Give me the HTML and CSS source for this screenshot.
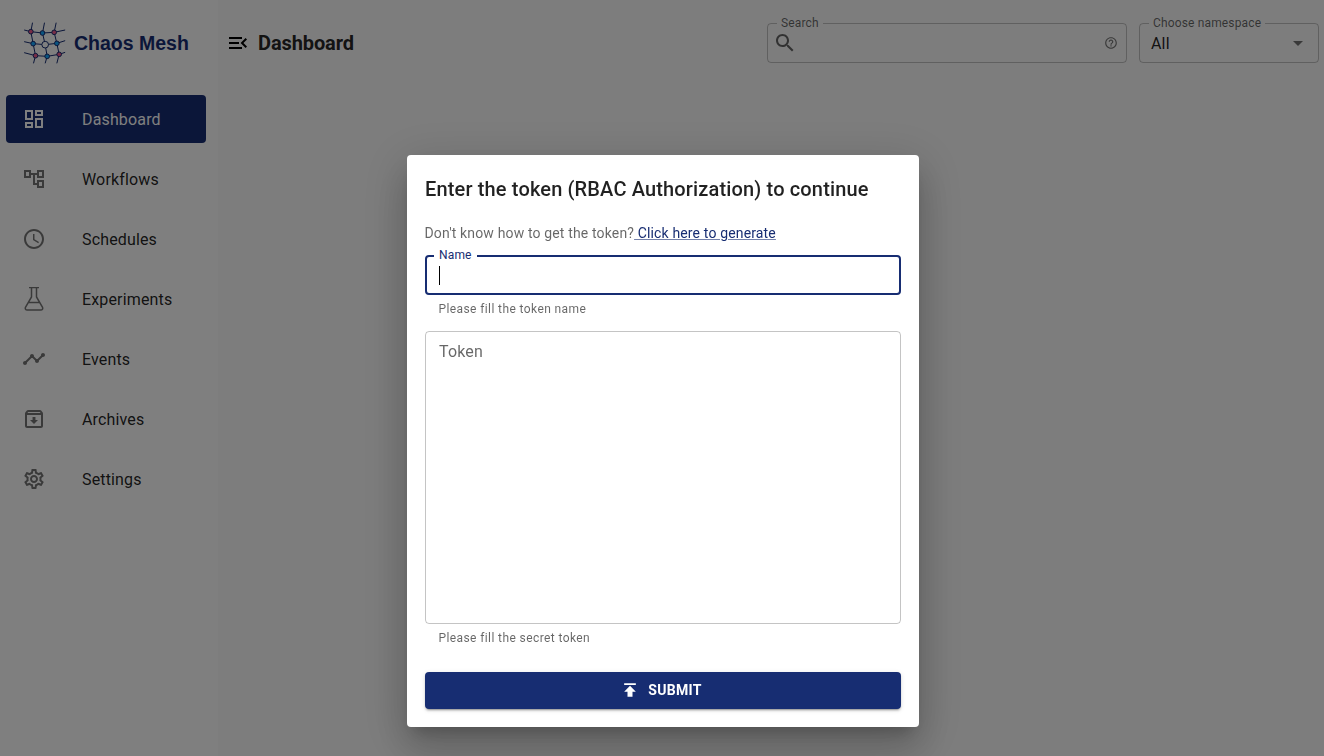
FILE: index.html
```html
<!DOCTYPE html>
<html lang="en">
<head>
  <meta charset="UTF-8">
  <title>Chaos Mesh Dashboard</title>
  <link rel="stylesheet" href="styles.css">
</head>
<body>

  <div class="app">
    <!-- SIDEBAR -->
    <aside class="sidebar">
      <div class="brand">
        <svg class="brand-logo" viewBox="72 66 125 126" fill="none">
          <g class="logo-lines">
            <path d="M72 90L92 95L127 99L162 97L195 90"/>
            <path d="M72 125L99 131L135 134L170 130L195 122"/>
            <path d="M72 158L106 167L141 169L177 163L195 157"/>
            <path d="M97 68L92 95L99 131L106 167L100 190"/>
            <path d="M133 68L127 99L135 134L141 169L135 190"/>
            <path d="M168 68L162 97L170 130L177 163L170 190"/>
          </g>
          <g class="logo-lines">
            <circle class="node-red" cx="92" cy="95" r="7"/>
            <circle class="node-blue" cx="127" cy="99" r="7"/>
            <circle class="node-red" cx="162" cy="97" r="7"/>
            <circle class="node-blue" cx="99" cy="131" r="7"/>
            <circle class="node-white" cx="135" cy="134" r="10"/>
            <circle class="node-blue" cx="170" cy="130" r="7"/>
            <circle class="node-red" cx="106" cy="167" r="7"/>
            <circle class="node-blue" cx="141" cy="169" r="7"/>
            <circle class="node-red" cx="177" cy="163" r="7"/>
          </g>
        </svg>
        <span class="brand-name">Chaos Mesh</span>
      </div>

      <nav class="nav">
        <a class="nav-item active">
          <svg class="nav-icon" viewBox="0 0 24 24"><path d="M19 5v2h-4V5h4M9 5v6H5V5h4m10 8v6h-4v-6h4M9 17v2H5v-2h4M21 3h-8v6h8V3zM11 3H3v10h8V3zm10 8h-8v10h8V11zm-10 4H3v6h8v-6z"/></svg>
          <span>Dashboard</span>
        </a>
        <a class="nav-item">
          <svg class="nav-icon" viewBox="0 0 24 24"><path d="M22 11V3h-7v3H9V3H2v8h7V8h2v10h4v3h7v-8h-7v3h-2V8h2v3h7zM7 9H4V5h3v4zm10 6h3v4h-3v-4zm0-10h3v4h-3V5z"/></svg>
          <span>Workflows</span>
        </a>
        <a class="nav-item">
          <svg class="nav-icon" viewBox="0 0 24 24"><path d="M11.99 2C6.47 2 2 6.48 2 12s4.47 10 9.99 10C17.52 22 22 17.52 22 12S17.52 2 11.99 2zM12 20c-4.42 0-8-3.58-8-8s3.58-8 8-8 8 3.58 8 8-3.58 8-8 8zm.5-13H11v6l5.25 3.15.75-1.23-4.5-2.67z"/></svg>
          <span>Schedules</span>
        </a>
        <a class="nav-item">
          <svg class="nav-icon flask" viewBox="0 0 24 24"><path d="M7 .5H17M9.500 .5V10L3.600 20c-.8 1.500 0 3 1.600 3H18.800c1.600 0 2.400-1.500 1.600-3L14.500 10V.5M6.500 15.500H17.500"/></svg>
          <span>Experiments</span>
        </a>
        <a class="nav-item">
          <svg class="nav-icon" viewBox="0 0 24 24"><path d="M23 8c0 1.100-.9 2-2 2-.18 0-.35-.02-.51-.07l-3.560 3.550c.05.16.07.34.07.52 0 1.100-.9 2-2 2s-2-.9-2-2c0-.18.02-.36.07-.52l-2.550-2.550c-.16.05-.34.07-.52.07s-.36-.02-.52-.07l-4.550 4.560c.05.16.07.33.07.51 0 1.100-.9 2-2 2s-2-.9-2-2 .9-2 2-2c.18 0 .35.02.51.07l4.560-4.550C8.020 9.360 8 9.180 8 9c0-1.100.9-2 2-2s2 .9 2 2c0 .18-.02.36-.07.52l2.550 2.550c.16-.05.34-.07.52-.07s.36.02.52.07l3.550-3.560C19.020 8.350 19 8.180 19 8c0-1.100.9-2 2-2s2 .9 2 2z"/></svg>
          <span>Events</span>
        </a>
        <a class="nav-item">
          <svg class="nav-icon" viewBox="0 0 24 24"><path d="m20.540 5.230-1.390-1.680C18.880 3.210 18.470 3 18 3H6c-.47 0-.88.21-1.160.55L3.460 5.230C3.170 5.570 3 6.020 3 6.500V19c0 1.100.9 2 2 2h14c1.100 0 2-.9 2-2V6.500c0-.48-.17-.93-.46-1.270zM6.240 5h11.520l.81.97H5.440l.8-.97zM5 19V8h14v11H5zm8.450-9h-2.900v3H8l4 4 4-4h-2.550z"/></svg>
          <span>Archives</span>
        </a>
        <a class="nav-item">
          <svg class="nav-icon" viewBox="0 0 24 24"><path d="M19.430 12.980c.04-.32.07-.64.07-.98 0-.34-.03-.66-.07-.98l2.110-1.650c.19-.15.24-.42.12-.64l-2-3.460c-.09-.16-.26-.25-.44-.25-.06 0-.12.01-.17.03l-2.490 1c-.52-.4-1.080-.73-1.690-.98l-.38-2.650C14.460 2.180 14.250 2 14 2h-4c-.25 0-.46.18-.49.42l-.38 2.650c-.61.25-1.170.59-1.690.98l-2.490-1c-.06-.02-.12-.03-.18-.03-.17 0-.34.09-.43.25l-2 3.460c-.13.22-.07.49.12.64l2.110 1.650c-.04.32-.07.65-.07.98 0 .33.03.66.07.98l-2.110 1.650c-.19.15-.24.42-.12.64l2 3.460c.09.16.26.25.44.25.06 0 .12-.01.17-.03l2.490-1c.52.4 1.080.73 1.690.98l.38 2.650c.03.24.24.42.49.42h4c.25 0 .46-.18.49-.42l.38-2.650c.61-.25 1.170-.59 1.690-.98l2.490 1c.06.02.12.03.18.03.17 0 .34-.09.43-.25l2-3.460c.12-.22.07-.49-.12-.64l-2.110-1.650zm-1.980-1.710c.04.31.05.52.05.73 0 .21-.02.43-.05.73l-.14 1.130.89.7 1.080.84-.7 1.210-1.270-.51-1.040-.42-.9.68c-.43.32-.84.56-1.250.73l-1.060.43-.16 1.130-.2 1.350h-1.400l-.19-1.350-.16-1.130-1.060-.43c-.43-.18-.83-.41-1.230-.71l-.91-.7-1.060.43-1.270.51-.7-1.210 1.080-.84.89-.7-.14-1.130c-.03-.31-.05-.54-.05-.74s.02-.43.05-.73l.14-1.130-.89-.7-1.080-.84.7-1.210 1.270.51 1.040.42.9-.68c.43-.32.84-.56 1.250-.73l1.060-.43.16-1.130.2-1.350h1.390l.19 1.350.16 1.130 1.060.43c.43.18.83.41 1.230.71l.91.7 1.060-.43 1.270-.51.7 1.210-1.070.85-.89.7.14 1.130zM12 8c-2.210 0-4 1.790-4 4s1.790 4 4 4 4-1.790 4-4-1.790-4-4-4zm0 6c-1.100 0-2-.9-2-2s.9-2 2-2 2 .9 2 2-.9 2-2 2z"/></svg>
          <span>Settings</span>
        </a>
      </nav>
    </aside>

    <!-- TOP BAR -->
    <main class="main">
      <header class="topbar">
        <svg class="menu-icon" viewBox="0 0 24 24"><path d="M3 18h13v-2H3v2zm0-5h10v-2H3v2zm0-7v2h13V6H3zm18 9.590L17.420 12 21 8.410 19.590 7l-5 5 5 5L21 15.590z"/></svg>
        <h1 class="page-title">Dashboard</h1>

        <div class="field field-search">
          <span class="field-label">Search</span>
          <svg class="search-icon" viewBox="0 0 24 24"><path d="M15.500 14h-.79l-.28-.27C15.410 12.590 16 11.110 16 9.500 16 5.910 13.090 3 9.500 3S3 5.910 3 9.500 5.910 16 9.500 16c1.610 0 3.090-.59 4.230-1.570l.27.28v.79l5 4.990L20.490 19l-4.990-5zm-6 0C7.010 14 5 11.990 5 9.500S7.010 5 9.500 5 14 7.010 14 9.500 11.990 14 9.500 14z"/></svg>
          <svg class="help-icon" viewBox="0 0 24 24"><path d="M11 18h2v-2h-2v2zm1-16C6.480 2 2 6.480 2 12s4.480 10 10 10 10-4.480 10-10S17.520 2 12 2zm0 18c-4.410 0-8-3.590-8-8s3.590-8 8-8 8 3.590 8 8-3.590 8-8 8zm0-14c-2.210 0-4 1.790-4 4h2c0-1.100.9-2 2-2s2 .9 2 2c0 2-3 1.750-3 5h2c0-2.250 3-2.500 3-5 0-2.210-1.790-4-4-4z"/></svg>
        </div>

        <div class="field field-namespace">
          <span class="field-label">Choose namespace</span>
          <span class="field-value">All</span>
          <svg class="drop-icon" viewBox="0 0 24 24"><path d="M7 10l5 5 5-5z"/></svg>
        </div>
      </header>
    </main>
  </div>

  <!-- TOKEN DIALOG -->
  <div class="backdrop">
    <div class="dialog">
      <h2 class="dialog-title">Enter the token (RBAC Authorization) to continue</h2>
      <p class="dialog-hint">Don't know how to get the token?<a class="dialog-link"> Click here to generate</a></p>

      <div class="token-name">
        <span class="token-name-label">Name</span>
        <span class="caret"></span>
      </div>
      <p class="helper">Please fill the token name</p>

      <div class="token-box">Token</div>
      <p class="helper">Please fill the secret token</p>

      <button class="submit">
        <svg class="submit-icon" viewBox="0 0 24 24"><path d="M5 4v2h14V4H5zm0 10h4v6h6v-6h4l-7-7-7 7z"/></svg>
        SUBMIT
      </button>
    </div>
  </div>

</body>
</html>
```

FILE: styles.css
```css
* {
  box-sizing: border-box;
}

body {
  margin: 0;
  height: 756px;
  overflow: hidden;
  font-family: Roboto, "Liberation Sans", sans-serif;
  letter-spacing: 0.15px;
  color: rgba(0, 0, 0, 0.87);
  background-color: #fafafa;
}

.app {
  display: flex;
  height: 100%;
}

/* sidebar */
.sidebar {
  flex: 0 0 218px;
  background-color: #fff;
  padding: 0 12px 0 6px;
}

.brand {
  display: flex;
  align-items: center;
  height: 86px;
  padding-left: 18px;
}

.brand-logo {
  width: 42px;
  height: 42px;
  flex: none;
}

.logo-lines {
  stroke: #172d72;
  stroke-width: 3;
}

.node-red {
  fill: #ef5a8c;
}

.node-blue {
  fill: #14a8ff;
}

.node-white {
  fill: #fff;
}

.brand-name {
  margin-left: 8px;
  font-family: "Liberation Sans", Arial, sans-serif;
  font-size: 19.5px;
  font-weight: 700;
  letter-spacing: 0;
  color: #172d72;
  white-space: nowrap;
}

.nav {
  display: flex;
  flex-direction: column;
  gap: 12px;
  padding-top: 9px;
}

.nav-item {
  display: flex;
  align-items: center;
  height: 48px;
  padding-left: 16px;
  border-radius: 4px;
  font-size: 16px;
}

.nav-item.active {
  background-color: #172d72;
  color: #fff;
}

.nav-icon {
  width: 24px;
  height: 24px;
  margin-right: 36px;
  flex: none;
  fill: rgba(0, 0, 0, 0.54);
}

.nav-item.active .nav-icon {
  fill: #fff;
}

.nav-icon.flask {
  fill: none;
  stroke: rgba(0, 0, 0, 0.54);
  stroke-width: 1.5;
}

/* top bar */
.main {
  flex: 1;
  min-width: 0;
}

.topbar {
  display: flex;
  align-items: center;
  height: 86px;
  padding-right: 5px;
}

.menu-icon {
  width: 24px;
  height: 24px;
  margin-left: 8px;
  flex: none;
}

.page-title {
  margin: 0 0 0 8px;
  font-size: 20px;
  font-weight: 700;
  letter-spacing: -0.1px;
  flex: 1;
}

.field {
  position: relative;
  height: 40px;
  border: 1px solid rgba(0, 0, 0, 0.23);
  border-radius: 4px;
  display: flex;
  align-items: center;
}

.field-search {
  width: 360px;
  margin-right: 12px;
  justify-content: space-between;
  padding: 0 8px 0 5px;
}

.field-namespace {
  width: 180px;
  padding: 0 13px 0 11px;
  justify-content: space-between;
}

.field-label {
  position: absolute;
  top: -8px;
  left: 9px;
  padding: 0 4px;
  font-size: 12px;
  line-height: 14px;
  color: rgba(0, 0, 0, 0.6);
  background-color: #fafafa;
}

.field-value {
  font-size: 16px;
}

.search-icon {
  width: 24px;
  height: 24px;
  fill: rgba(0, 0, 0, 0.6);
}

.help-icon {
  width: 14px;
  height: 14px;
  fill: rgba(0, 0, 0, 0.54);
}

.drop-icon {
  width: 24px;
  height: 24px;
  margin-right: -5px;
  fill: rgba(0, 0, 0, 0.54);
}

/* dialog */
.backdrop {
  position: fixed;
  inset: 0;
  background-color: rgba(0, 0, 0, 0.5);
  display: flex;
  justify-content: center;
  align-items: flex-start;
  padding: 155px 0 0 2px;
}

.dialog {
  width: 512px;
  height: 572px;
  padding: 18px;
  background-color: #fff;
  border-radius: 4px;
  box-shadow: 0 11px 15px -7px rgba(0, 0, 0, 0.2), 0 24px 38px 3px rgba(0, 0, 0, 0.14), 0 9px 46px 8px rgba(0, 0, 0, 0.12);
}

.dialog-title {
  margin: 0;
  font-size: 20px;
  line-height: 32px;
  font-weight: 500;
}

.dialog-hint {
  margin: 18px 0 0 -0.5px;
  font-size: 14px;
  line-height: 20px;
  color: rgba(0, 0, 0, 0.6);
}

.dialog-link {
  color: #172d72;
  text-decoration: underline;
  text-decoration-color: rgba(23, 45, 114, 0.6);
}

.token-name {
  position: relative;
  height: 40px;
  margin-top: 12px;
  border: 2px solid #172d72;
  border-radius: 4px;
  display: flex;
  align-items: center;
  padding-left: 12px;
}

.token-name-label {
  position: absolute;
  top: -9px;
  left: 7px;
  padding: 0 5px;
  font-size: 12px;
  line-height: 14px;
  color: #172d72;
  background-color: #fff;
}

.caret {
  width: 1px;
  height: 19px;
  background-color: #000;
}

.helper {
  margin: 0;
  padding: 7px 14px 0 13.5px;
  font-size: 12px;
  line-height: 14px;
  letter-spacing: 0.4px;
  color: rgba(0, 0, 0, 0.6);
}

.token-box {
  height: 293px;
  margin-top: 15px;
  padding: 10px 13px;
  border: 1px solid rgba(0, 0, 0, 0.23);
  border-radius: 4px;
  font-size: 16px;
  line-height: 20px;
  color: rgba(0, 0, 0, 0.6);
}

.submit {
  display: flex;
  align-items: center;
  justify-content: center;
  gap: 8px;
  width: 100%;
  height: 37px;
  margin-top: 27px;
  padding: 0 0 1px;
  border: 0;
  border-radius: 4px;
  background-color: #172d72;
  color: #fff;
  font-family: inherit;
  font-size: 14px;
  font-weight: 700;
  letter-spacing: 0.3px;
  box-shadow: 0 3px 1px -2px rgba(0, 0, 0, 0.2), 0 2px 2px 0 rgba(0, 0, 0, 0.14), 0 1px 5px 0 rgba(0, 0, 0, 0.12);
}

.submit-icon {
  width: 20px;
  height: 20px;
  margin-left: -4px;
  fill: #fff;
}
```
